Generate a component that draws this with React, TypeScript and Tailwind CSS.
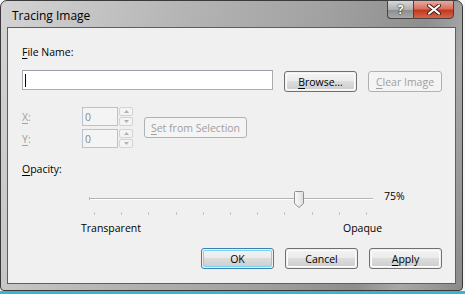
import React from "react";

const U = ({ children }: { children: React.ReactNode }) => (
  <span className="underline underline-offset-[2px]">{children}</span>
);

function Btn({
  children,
  disabled,
  def,
  w = "w-[73px]",
}: {
  children: React.ReactNode;
  disabled?: boolean;
  def?: boolean;
  w?: string;
}) {
  if (disabled) {
    return (
      <div
        className={`${w} h-[21px] rounded-[3px] border border-[#adb2b5] bg-[#f4f4f4] flex items-center justify-center text-[#a0a0a0]`}
      >
        {children}
      </div>
    );
  }
  return (
    <div
      className={`${w} h-[21px] rounded-[3px] border ${
        def ? "border-[#3c7fb1]" : "border-[#707070]"
      } p-px`}
    >
      <div
        className={`w-full h-full rounded-[2px] border ${
          def ? "border-[#76d4f5]" : "border-[#fcfcfc]"
        } flex items-center justify-center text-black bg-[linear-gradient(to_bottom,#f2f2f2_0%,#ebebeb_45%,#dddddd_50%,#cfcfcf_100%)]`}
      >
        {children}
      </div>
    </div>
  );
}

function Spin({ label }: { label: React.ReactNode }) {
  return (
    <div className="flex items-center h-[19px]">
      <div className="w-[60px] text-[#a0a0a0]">{label}</div>
      <div className="w-[36px] h-[19px] border border-[#b8c3d1] bg-[#f4f4f4] flex items-center pl-[2px] text-[#8a8a8a]">
        0
      </div>
      <div className="ml-[1px] w-[14px] h-[19px] flex flex-col gap-px">
        <div className="flex-1 border border-[#d3d3d3] rounded-[2px] bg-[#f4f4f4] flex items-center justify-center">
          <svg width="5" height="3" viewBox="0 0 5 3">
            <path d="M0 3 L2.5 0 L5 3 Z" fill="#b0b0b0" />
          </svg>
        </div>
        <div className="flex-1 border border-[#d3d3d3] rounded-[2px] bg-[#f4f4f4] flex items-center justify-center">
          <svg width="5" height="3" viewBox="0 0 5 3">
            <path d="M0 0 L2.5 3 L5 0 Z" fill="#b0b0b0" />
          </svg>
        </div>
      </div>
    </div>
  );
}

function Slider() {
  const ticks = Array.from({ length: 11 }, (_, i) => 5 + i * 27.2);
  return (
    <svg width="286" height="26" viewBox="0 0 286 26">
      <line x1="0" y1="7.5" x2="284" y2="7.5" stroke="#b4b4b4" strokeWidth="1" />
      <line x1="0" y1="8.5" x2="284" y2="8.5" stroke="#ffffff" strokeWidth="1" />
      <line x1="0.5" y1="6" x2="0.5" y2="9" stroke="#b4b4b4" />
      {ticks.map((x, i) => (
        <line
          key={i}
          x1={Math.round(x) + 0.5}
          y1="21"
          x2={Math.round(x) + 0.5}
          y2="24"
          stroke="#c4c4c4"
          strokeWidth="1"
        />
      ))}
      <path
        d="M205.5 1.5 Q205.5 0.5 206.5 0.5 L213.5 0.5 Q214.5 0.5 214.5 1.5 L214.5 12.5 L210 16.5 L205.5 12.5 Z"
        fill="url(#thumbg)"
        stroke="#8f8f8f"
      />
      <defs>
        <linearGradient id="thumbg" x1="0" y1="0" x2="1" y2="0">
          <stop offset="0" stopColor="#fafafa" />
          <stop offset="1" stopColor="#dedede" />
        </linearGradient>
      </defs>
    </svg>
  );
}

export default function App() {
  return (
    <div
      className="w-[465px] h-[294px] bg-[#f4f8fa] flex flex-col overflow-hidden text-[10.5px] leading-[14px] text-black"
      style={{ fontFamily: '"Open Sans", "Noto Sans", sans-serif' }}
    >
      <div className="w-[463px] h-[291px] rounded-t-[7px] rounded-b-[4px] border border-[#3a3a3a] bg-[linear-gradient(105deg,#d4d4d4_0%,#b4b4b4_35%,#a2a2a2_60%,#8e8e8e_80%,#a8a8a8_88%,#8a8a8a_100%)] flex flex-col">
        <div className="h-[26px] flex items-start pl-[11px] pr-[8px]">
          <div className="mt-[8px] text-[12px] leading-[14px] text-black">Tracing Image</div>
          <div className="ml-auto flex -mt-px">
            <div className="w-[26px] h-[19px] rounded-bl-[4px] border border-[#444] border-r-0 bg-[linear-gradient(to_bottom,#d8d8d8_0%,#b0b0b0_50%,#8e8e8e_55%,#a8a8a8_100%)] flex items-center justify-center">
              <span className="text-white font-bold text-[12px] leading-[12px] [text-shadow:0_0_2px_#222,0_0_1px_#000]">?</span>
            </div>
            <div className="w-[41px] h-[19px] rounded-br-[4px] border border-[#444] bg-[linear-gradient(to_bottom,#e9a99c_0%,#d7715f_45%,#c0391f_55%,#d8644a_100%)] flex items-center justify-center">
              <svg width="14" height="11" viewBox="0 0 14 11">
                <path d="M2 1.5 L12 9.5 M12 1.5 L2 9.5" stroke="#4a1a10" strokeWidth="4" strokeLinecap="round" />
                <path d="M2 1.5 L12 9.5 M12 1.5 L2 9.5" stroke="#ffffff" strokeWidth="2.2" strokeLinecap="round" />
              </svg>
            </div>
          </div>
        </div>
        <div className="mx-[6px] h-[257px] border border-[#5e5e5e] bg-[#f0f0f0] flex flex-col pl-[14px]">
          <div className="mt-[17px] h-[14px]">
            <U>F</U>ile Name:
          </div>
          <div className="mt-[11px] h-[22px] flex items-start">
            <div className="w-[251px] h-[20px] border border-[#abadb3] border-t-[#9a9ea6] bg-white flex items-center pl-[2px]">
              <div className="w-px h-[13px] bg-black" />
            </div>
            <div className="ml-[11px] mt-[1px]">
              <Btn>
                <span>
                  <U>B</U>rowse...
                </span>
              </Btn>
            </div>
            <div className="ml-[11px] mt-[1px]">
              <Btn disabled w="w-[74px]">
                <span>
                  <U>C</U>lear Image
                </span>
              </Btn>
            </div>
          </div>
          <div className="mt-[15px] flex items-center">
            <div className="flex flex-col gap-[3px]">
              <Spin
                label={
                  <span>
                    <U>X</U>:
                  </span>
                }
              />
              <Spin
                label={
                  <span>
                    <U>Y</U>:
                  </span>
                }
              />
            </div>
            <div className="ml-[11px]">
              <Btn disabled w="w-[103px]">
                <span>
                  <U>S</U>et from Selection
                </span>
              </Btn>
            </div>
          </div>
          <div className="mt-[14px] h-[14px]">
            <U>O</U>pacity:
          </div>
          <div className="mt-[15px] h-[26px] flex items-start pl-[67px]">
            <Slider />
            <div className="ml-[9px] mt-[-2px]">75%</div>
          </div>
          <div className="mt-[4px] h-[14px] flex pl-[59px]">
            <div className="w-[262px]">Transparent</div>
            <div>Opaque</div>
          </div>
          <div className="mt-[13px] flex pl-[179px] gap-[11px]">
            <Btn def>OK</Btn>
            <Btn>Cancel</Btn>
            <Btn>
              <span>
                <U>A</U>pply
              </span>
            </Btn>
          </div>
        </div>
      </div>
      <div className="h-[3px] bg-[#3cb4d0]" />
    </div>
  );
}
